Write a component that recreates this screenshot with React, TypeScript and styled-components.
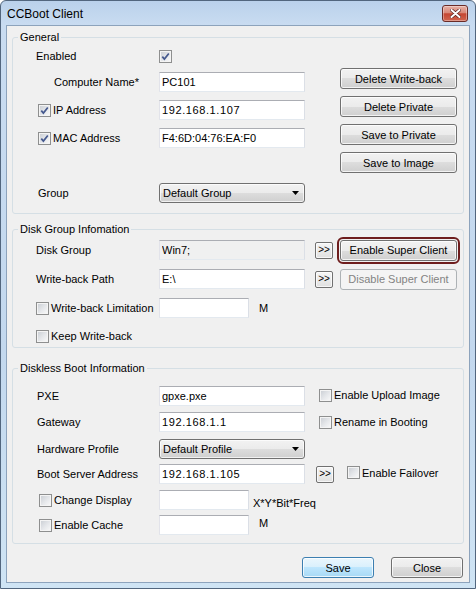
import styled, { createGlobalStyle, css } from "styled-components"

const GlobalStyle = createGlobalStyle`
  html, body {
    margin: 0;
    padding: 0;
    background: #ffffff;
  }
  body {
    font-family: "Liberation Sans", Arial, sans-serif;
    font-size: 11px;
    color: #000;
  }
`

function CheckBox({ checked }: { checked?: boolean }) {
  return (
    <Check $checked={checked}>
      {checked && (
        <svg width="9" height="9" viewBox="0 0 9 9" aria-hidden>
          <path d="M1.3 4.6 L3.4 7.1 L7.8 1.5" fill="none" stroke="#45598e" strokeWidth="1.7" />
        </svg>
      )}
    </Check>
  )
}

function ComboBox({ value }: { value: string }) {
  return (
    <Select role="combobox">
      <span>{value}</span>
      <svg width="7" height="4" viewBox="0 0 7 4" aria-hidden>
        <path d="M0 0 H7 L3.5 4 Z" fill="#000" />
      </svg>
    </Select>
  )
}

export default function App() {
  return (
    <>
      <GlobalStyle />
      <Window>
        <TitleBar>
          <Caption>CCBoot Client</Caption>
          <CloseBox aria-label="Close">
            <svg width="11" height="9" viewBox="0 0 11 9" aria-hidden>
              <path d="M1.5 1 L9.5 8 M9.5 1 L1.5 8" stroke="#5a2320" strokeWidth="3.4" strokeLinecap="round" />
              <path d="M1.5 1 L9.5 8 M9.5 1 L1.5 8" stroke="#ffffff" strokeWidth="2" strokeLinecap="round" />
            </svg>
          </CloseBox>
        </TitleBar>

        <Client>
          <Group $top={5} $bottom={10}>
            <Legend>General</Legend>
            <Split>
              <FormCol>
                <Row $top={2}>
                  <LabelCell $indent={23}>Enabled</LabelCell>
                  <CheckBox checked />
                </Row>
                <Row $top={6}>
                  <LabelCell $indent={41}>Computer Name*</LabelCell>
                  <TextBox $w={146} defaultValue="PC101" />
                </Row>
                <Row $top={8}>
                  <LabelCell $indent={25}>
                    <CheckBox checked />
                    IP Address
                  </LabelCell>
                  <TextBox $w={146} $spaced defaultValue="192.168.1.107" />
                </Row>
                <Row $top={8}>
                  <LabelCell $indent={25}>
                    <CheckBox checked />
                    MAC Address
                  </LabelCell>
                  <TextBox $w={146} defaultValue="F4:6D:04:76:EA:F0" />
                </Row>
                <Row $top={35}>
                  <LabelCell $indent={25}>Group</LabelCell>
                  <ComboBox value="Default Group" />
                </Row>
              </FormCol>
              <ButtonCol>
                <PushButton $w={117}>Delete Write-back</PushButton>
                <PushButton $w={117}>Delete Private</PushButton>
                <PushButton $w={117}>Save to Private</PushButton>
                <PushButton $w={117}>Save to Image</PushButton>
              </ButtonCol>
            </Split>
          </Group>

          <Group $top={9} $bottom={2}>
            <Legend>Disk Group Infomation</Legend>
            <Row $top={4}>
              <LabelCell $indent={23}>Disk Group</LabelCell>
              <TextBox $w={146} $readonly readOnly defaultValue="Win7;" />
              <MiniButton $gap={10}>&gt;&gt;</MiniButton>
              <PushButton $w={117} $gap={7} $tone="marked">Enable Super Client</PushButton>
            </Row>
            <Row $top={9}>
              <LabelCell $indent={23}>Write-back Path</LabelCell>
              <TextBox $w={146} defaultValue="E:\" />
              <MiniButton $gap={10}>&gt;&gt;</MiniButton>
              <PushButton $w={117} $gap={7} $tone="disabled" disabled>Disable Super Client</PushButton>
            </Row>
            <Row $top={9}>
              <LabelCell $indent={23}>
                <CheckBox />
                Write-back Limitation
              </LabelCell>
              <TextBox $w={90} defaultValue="" />
              <Unit $gap={10}>M</Unit>
            </Row>
            <Row $top={9} $h={18}>
              <LabelCell $indent={23}>
                <CheckBox />
                Keep Write-back
              </LabelCell>
            </Row>
          </Group>

          <Group $top={14} $bottom={8}>
            <Legend>Diskless Boot Information</Legend>
            <Row $top={11}>
              <LabelCell $indent={24}>PXE</LabelCell>
              <TextBox $w={146} defaultValue="gpxe.pxe" />
              <SideCheck $gap={14} $lift={2}>
                <CheckBox />
                Enable Upload Image
              </SideCheck>
            </Row>
            <Row $top={6}>
              <LabelCell $indent={24}>Gateway</LabelCell>
              <TextBox $w={146} $spaced defaultValue="192.168.1.1" />
              <SideCheck $gap={14}>
                <CheckBox />
                Rename in Booting
              </SideCheck>
            </Row>
            <Row $top={7}>
              <LabelCell $indent={24}>Hardware Profile</LabelCell>
              <ComboBox value="Default Profile" />
            </Row>
            <Row $top={5}>
              <LabelCell $indent={24}>Boot Server Address</LabelCell>
              <TextBox $w={146} $spaced defaultValue="192.168.1.105" />
              <MiniButton $gap={11}>&gt;&gt;</MiniButton>
              <SideCheck $gap={13} $lift={3}>
                <CheckBox />
                Enable Failover
              </SideCheck>
            </Row>
            <Row $top={6}>
              <LabelCell $indent={26}>
                <CheckBox />
                Change Display
              </LabelCell>
              <TextBox $w={90} defaultValue="" />
              <Unit $gap={4} $drop={6}>X*Y*Bit*Freq</Unit>
            </Row>
            <Row $top={5}>
              <LabelCell $indent={26}>
                <CheckBox />
                Enable Cache
              </LabelCell>
              <TextBox $w={90} defaultValue="" />
              <Unit $gap={10} $drop={-4}>M</Unit>
            </Row>
          </Group>

          <Footer>
            <PushButton $w={72} $tone="default">Save</PushButton>
            <PushButton $w={72}>Close</PushButton>
          </Footer>
        </Client>
      </Window>
    </>
  )
}

const Window = styled.div`
  width: 476px;
  height: 589px;
  box-sizing: border-box;
  display: flex;
  flex-direction: column;
  border: 1px solid #52667e;
  border-radius: 6px 6px 0 0;
  padding: 0 5px 5px;
  background: linear-gradient(#bad1eb 0px, #c9dcf1 24px, #c3d8ee 60%, #cfe4f4 100%);
`

const TitleBar = styled.div`
  height: 24px;
  display: flex;
  align-items: center;
  justify-content: space-between;
  padding-left: 1px;
`

const Caption = styled.span`
  font-family: "Liberation Sans", Arial, sans-serif;
  font-size: 12px;
  padding-top: 2px;
  color: #000;
`

const CloseBox = styled.button`
  width: 26px;
  height: 17px;
  margin-right: 2px;
  padding: 0;
  display: flex;
  align-items: center;
  justify-content: center;
  border: 1px solid #6a2b27;
  border-radius: 3px;
  background: linear-gradient(#e6b1a6 0%, #d98878 45%, #c54632 52%, #d0654f 100%);
  box-shadow: inset 0 0 0 1px rgba(255, 255, 255, 0.35);
`

const Client = styled.div`
  flex: 1;
  display: flex;
  flex-direction: column;
  background: #f0f0f0;
  border: 1px solid #8da3bc;
  padding: 0 5px;
`

const Group = styled.fieldset<{ $top: number; $bottom: number }>`
  margin: ${p => p.$top}px 0 0;
  padding: 0 0 ${p => p.$bottom}px;
  min-width: 0;
  border: 1px solid #d5dfe5;
  border-radius: 3px;
`

const Legend = styled.legend`
  margin-left: 5px;
  padding: 0 2px;
  font-size: 11px;
  line-height: 13px;
  color: #000;
`

const Split = styled.div`
  display: flex;
`

const FormCol = styled.div`
  width: 292px;
  display: flex;
  flex-direction: column;
`

const ButtonCol = styled.div`
  margin-left: 35px;
  padding-top: 24px;
  display: flex;
  flex-direction: column;
  gap: 7px;
`

const Row = styled.div<{ $top: number; $h?: number }>`
  display: flex;
  align-items: center;
  height: ${p => p.$h ?? 20}px;
  margin-top: ${p => p.$top}px;
`

const LabelCell = styled.label<{ $indent: number }>`
  width: 146px;
  flex: none;
  box-sizing: border-box;
  padding-left: ${p => p.$indent}px;
  display: flex;
  align-items: center;
  gap: 2px;
  white-space: nowrap;
`

const Check = styled.span<{ $checked?: boolean }>`
  width: 13px;
  height: 13px;
  flex: none;
  box-sizing: border-box;
  display: inline-flex;
  align-items: center;
  justify-content: center;
  border: 1px solid #8e8f8f;
  box-shadow: inset 0 0 0 1px #f4f4f4;
  background: linear-gradient(135deg, #c8ccd2 0%, #e6e8eb 55%, #fafafa 100%);
`

const TextBox = styled.input<{ $w: number; $readonly?: boolean; $spaced?: boolean }>`
  width: ${p => p.$w}px;
  height: 20px;
  flex: none;
  box-sizing: border-box;
  margin: 0;
  padding: 0 2px;
  font: 11px "Liberation Sans", Arial, sans-serif;
  color: #000;
  letter-spacing: ${p => (p.$spaced ? "0.6px" : "0")};
  border: 1px solid;
  border-color: #abadb3 #dbdfe6 #e3e9ef #e2e3ea;
  background: ${p => (p.$readonly ? "#f0f0f0" : "#ffffff")};
  outline: none;
`

const Select = styled.div`
  width: 146px;
  height: 20px;
  flex: none;
  box-sizing: border-box;
  display: flex;
  align-items: center;
  justify-content: space-between;
  padding: 0 5px 0 3px;
  border: 1px solid #707070;
  border-radius: 3px;
  background: linear-gradient(#f2f2f2 0%, #ebebeb 50%, #dddddd 50%, #cfcfcf 100%);
  box-shadow: inset 0 0 0 1px rgba(255, 255, 255, 0.7);
`

const toneStyles = {
  normal: css`
    border-color: #707070;
    color: #000;
    background: linear-gradient(#f2f2f2 0%, #ebebeb 50%, #dddddd 50%, #cfcfcf 100%);
  `,
  default: css`
    border-color: #3c7fb1;
    color: #000;
    background: linear-gradient(#eaf6fd 0%, #d9f0fc 50%, #bee6fd 50%, #a7d9f5 100%);
  `,
  marked: css`
    border-color: #707070;
    color: #000;
    background: linear-gradient(#f2f2f2 0%, #ebebeb 50%, #dddddd 50%, #cfcfcf 100%);
    outline: 2px solid #6e1d1d;
    outline-offset: 1px;
  `,
  disabled: css`
    border-color: #adb2b5;
    color: #838383;
    background: #f4f4f4;
    box-shadow: none;
  `,
}

const PushButton = styled.button<{ $w: number; $gap?: number; $tone?: keyof typeof toneStyles }>`
  width: ${p => p.$w}px;
  height: 21px;
  flex: none;
  box-sizing: border-box;
  margin: 0 0 0 ${p => p.$gap ?? 0}px;
  padding: 0;
  font: 11px "Liberation Sans", Arial, sans-serif;
  border: 1px solid;
  border-radius: 3px;
  box-shadow: inset 0 0 0 1px rgba(255, 255, 255, 0.75);
  ${p => toneStyles[p.$tone ?? "normal"]}
`

const MiniButton = styled.button<{ $gap: number }>`
  width: 18px;
  height: 17px;
  flex: none;
  box-sizing: border-box;
  margin: 0 0 0 ${p => p.$gap}px;
  padding: 0 0 1px;
  font: 10px "Liberation Sans", Arial, sans-serif;
  color: #000;
  border: 1px solid #707070;
  border-radius: 2px;
  background: linear-gradient(#f6f6f6, #e0e0e0);
  box-shadow: inset 0 0 0 1px rgba(255, 255, 255, 0.7);
`

const Unit = styled.span<{ $gap: number; $drop?: number }>`
  margin-left: ${p => p.$gap}px;
  padding-top: ${p => Math.max(p.$drop ?? 0, 0)}px;
  padding-bottom: ${p => Math.max(-(p.$drop ?? 0), 0)}px;
  white-space: nowrap;
`

const SideCheck = styled.label<{ $gap: number; $lift?: number }>`
  margin-left: ${p => p.$gap}px;
  padding-bottom: ${p => p.$lift ?? 0}px;
  display: flex;
  align-items: center;
  gap: 2px;
  white-space: nowrap;
`

const Footer = styled.div`
  margin-top: 13px;
  padding-right: 1px;
  display: flex;
  justify-content: flex-end;
  gap: 17px;
`
